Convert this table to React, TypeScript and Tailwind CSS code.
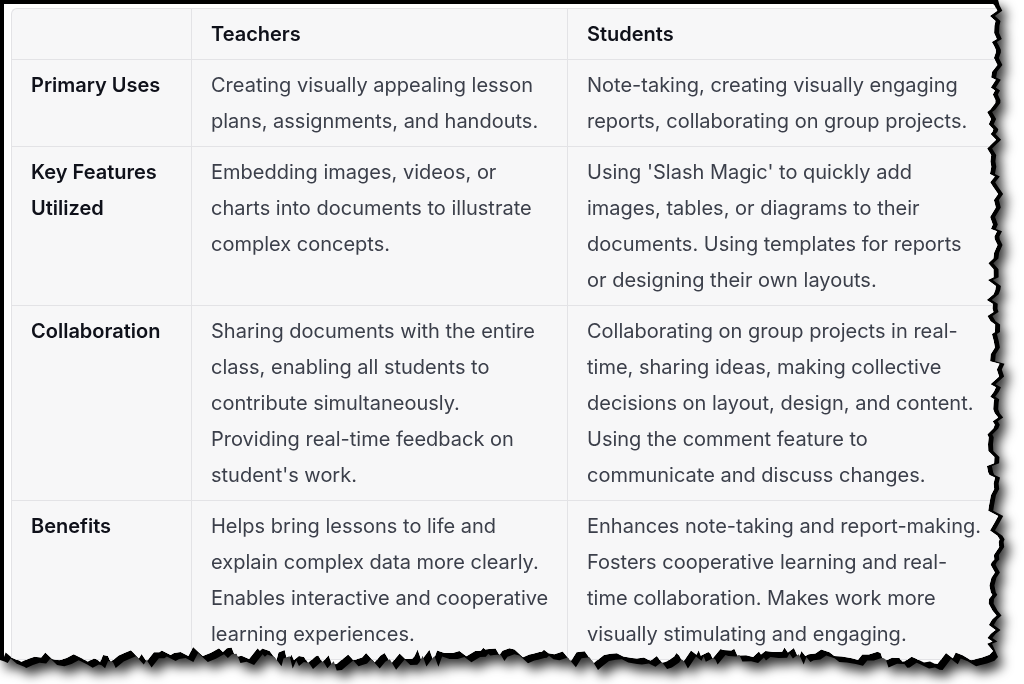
import React from 'react';

type Row = {
  label: string[];
  teachers: string[];
  students: string[];
};

const rows: Row[] = [
  {
    label: ['Primary Uses'],
    teachers: ['Creating visually appealing lesson', 'plans, assignments, and handouts.'],
    students: ['Note-taking, creating visually engaging', 'reports, collaborating on group projects.'],
  },
  {
    label: ['Key Features', 'Utilized'],
    teachers: ['Embedding images, videos, or', 'charts into documents to illustrate', 'complex concepts.'],
    students: [
      "Using 'Slash Magic' to quickly add",
      'images, tables, or diagrams to their',
      'documents. Using templates for reports',
      'or designing their own layouts.',
    ],
  },
  {
    label: ['Collaboration'],
    teachers: [
      'Sharing documents with the entire',
      'class, enabling all students to',
      'contribute simultaneously.',
      'Providing real-time feedback on',
      "student's work.",
    ],
    students: [
      'Collaborating on group projects in real-',
      'time, sharing ideas, making collective',
      'decisions on layout, design, and content.',
      'Using the comment feature to',
      'communicate and discuss changes.',
    ],
  },
  {
    label: ['Benefits'],
    teachers: [
      'Helps bring lessons to life and',
      'explain complex data more clearly.',
      'Enables interactive and cooperative',
      'learning experiences.',
    ],
    students: [
      'Enhances note-taking and report-making.',
      'Fosters cooperative learning and real-',
      'time collaboration. Makes work more',
      'visually stimulating and engaging.',
    ],
  },
];

// small seeded random so the torn edge is the same every render
function mulberry32(seed: number) {
  return () => {
    seed |= 0;
    seed = (seed + 0x6d2b79f5) | 0;
    let t = Math.imul(seed ^ (seed >>> 15), 1 | seed);
    t = (t + Math.imul(t ^ (t >>> 7), 61 | t)) ^ t;
    return ((t ^ (t >>> 14)) >>> 0) / 4294967296;
  };
}

function tornEdges() {
  const r = mulberry32(11);
  const right: [number, number][] = [];
  let y = 0;
  while (y < 645) {
    right.push([998 + (r() - 0.5) * 10 + Math.sin(y / 27) * 2, y]);
    y += 2 + r() * 6;
  }
  const bottom: [number, number][] = [];
  let x = 998;
  while (x > 0) {
    bottom.push([x, 662 + (r() - 0.5) * 13 + Math.sin(x / 45) * 3]);
    x -= 2 + r() * 7;
  }
  const outer: [number, number][] = [[0, 0], ...right, ...bottom, [0, 660]];
  const inner: [number, number][] = [
    [4, 4],
    ...right.map(([px, py]) => [px - 5, Math.max(py, 4)] as [number, number]),
    ...bottom.map(([px, py]) => [Math.max(px - 5, 4), py - 6] as [number, number]),
    [4, 654],
  ];
  const toPoly = (pts: [number, number][]) =>
    `polygon(${pts.map(([a, b]) => `${a.toFixed(1)}px ${b.toFixed(1)}px`).join(', ')})`;
  return { outer: toPoly(outer), inner: toPoly(inner) };
}

const Lines: React.FC<{ lines: string[] }> = ({ lines }) => (
  <>
    {lines.map((l, i) => (
      <div key={i} className="whitespace-nowrap">
        {l}
      </div>
    ))}
  </>
);

const cell = 'px-[19px] py-[7px] border-r border-b border-[#e3e3e6]';

const App: React.FC = () => {
  const edges = tornEdges();

  return (
    <div
      className="w-[1024px] h-[684px] bg-white overflow-hidden"
      style={{ fontFamily: 'Inter, "Noto Sans", sans-serif' }}
    >
      <div className="w-[1012px] h-[678px] drop-shadow-[5px_7px_6px_rgba(0,0,0,0.8)]">
        <div className="w-full h-full bg-black" style={{ clipPath: edges.outer }}>
          <div className="w-full h-full bg-white pl-[11px] pt-[8px]" style={{ clipPath: edges.inner }}>
            <div className="grid grid-cols-[180px_376px_440px] w-[998px] bg-[#f7f7f8] border-l border-t border-[#e3e3e6] rounded-tl-md text-[20px] leading-[36px] text-[#3b3f4a]">
              <div className={`${cell} py-[6px]`} />
              <div className={`${cell} py-[6px] font-semibold text-[#0f111a]`}>Teachers</div>
              <div className={`${cell} py-[6px] font-semibold text-[#0f111a]`}>Students</div>
              {rows.map((row, i) => (
                <React.Fragment key={i}>
                  <div className={`${cell} font-semibold text-[#0f111a]`}>
                    <Lines lines={row.label} />
                  </div>
                  <div className={cell}>
                    <Lines lines={row.teachers} />
                  </div>
                  <div className={cell}>
                    <Lines lines={row.students} />
                  </div>
                </React.Fragment>
              ))}
            </div>
          </div>
        </div>
      </div>
    </div>
  );
};

export default App;
